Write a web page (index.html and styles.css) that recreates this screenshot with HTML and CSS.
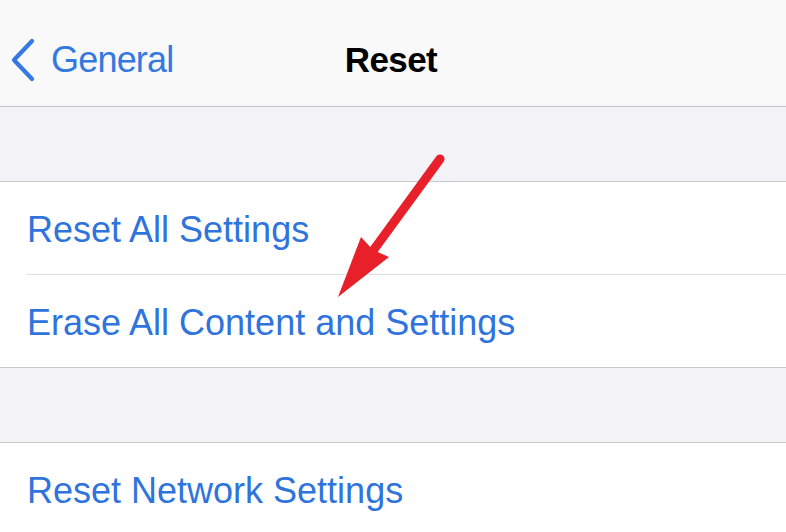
FILE: index.html
```html
<!DOCTYPE html>
<html>
<head>
<meta charset="utf-8">
<link rel="stylesheet" href="styles.css">
</head>
<body>
<div class="screen">
  <header class="navbar">
    <div class="back">
      <svg class="chevron" width="28" height="44" viewBox="0 0 28 44">
        <path d="M23 3 L5 22 L23 41" fill="none" stroke="#3478e0" stroke-width="4.2" stroke-linecap="round" stroke-linejoin="round"/>
      </svg>
      <span class="back-label">General</span>
    </div>
    <div class="title">Reset</div>
  </header>
  <div class="gap"></div>
  <section class="group">
    <div class="row"><span>Reset All Settings</span></div>
    <div class="row"><span>Erase All Content and Settings</span></div>
  </section>
  <div class="gap"></div>
  <section class="group">
    <div class="row"><span>Reset Network Settings</span></div>
  </section>
  <svg class="arrow" width="786" height="532" viewBox="0 0 786 532">
    <line x1="440" y1="159" x2="367" y2="259" stroke="#e8202a" stroke-width="9" stroke-linecap="round"/>
    <polygon points="338,297 361,237 373,250 389,257" fill="#e8202a"/>
  </svg>
</div>
</body>
</html>
```
FILE: styles.css
```css
* { box-sizing: border-box; }
html, body { margin: 0; padding: 0; }
body {
  width: 786px;
  height: 532px;
  overflow: hidden;
  background: #ffffff;
  font-family: "Liberation Sans", Arial, sans-serif;
}
.screen {
  position: relative;
  width: 786px;
  height: 532px;
  overflow: hidden;
  display: flex;
  flex-direction: column;
}
.navbar {
  flex: none;
  height: 107px;
  background: #f9f9f9;
  border-bottom: 1px solid #c3c3c6;
  position: relative;
  display: flex;
  align-items: center;
  padding-top: 14px;
}
.back {
  display: flex;
  align-items: center;
  padding-left: 9px;
  gap: 14px;
}
.chevron { display: block; }
.back-label {
  color: #3478e0;
  font-size: 36px;
  letter-spacing: -0.8px;
}
.title {
  position: absolute;
  left: 0;
  right: 0;
  top: 0;
  bottom: 0;
  padding-top: 14px;
  display: flex;
  align-items: center;
  justify-content: center;
  font-size: 35px;
  font-weight: bold;
  letter-spacing: -0.6px;
  color: #000;
  padding-right: 4px;
}
.gap {
  flex: none;
  height: 75px;
  background: #f2f2f7;
  border-bottom: 1px solid #c8c8cc;
}
.group {
  flex: none;
  background: #fff;
  border-bottom: 1px solid #c8c8cc;
  padding-left: 26px;
}
.row {
  height: 93px;
  display: flex;
  align-items: center;
  color: #2f74dc;
  font-size: 36px;
  padding-left: 1px;
  padding-top: 4px;
  border-bottom: 1px solid #e0e0e4;
}
.row:last-child { border-bottom: none; height: 92px; }
.arrow {
  position: absolute;
  left: 0;
  top: 0;
  pointer-events: none;
}
```
